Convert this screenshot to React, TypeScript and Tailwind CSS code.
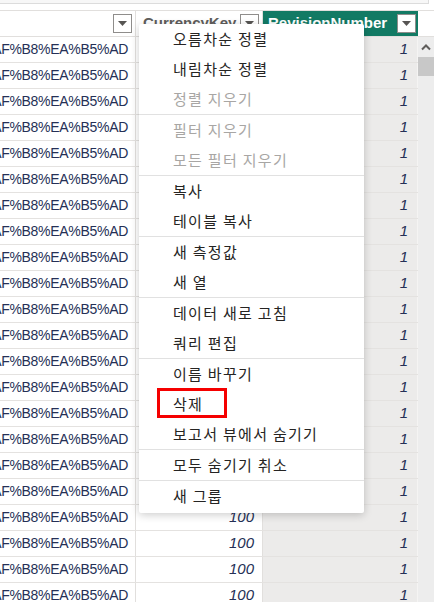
import React from "react";

const ROWS = Array.from({ length: 22 }, (_, i) => i);

type Item = { label: string; disabled?: boolean };

const GROUPS: Item[][] = [
  [{ label: "오름차순 정렬" }, { label: "내림차순 정렬" }, { label: "정렬 지우기", disabled: true }],
  [{ label: "필터 지우기", disabled: true }, { label: "모든 필터 지우기", disabled: true }],
  [{ label: "복사" }, { label: "테이블 복사" }],
  [{ label: "새 측정값" }, { label: "새 열" }],
  [{ label: "데이터 새로 고침" }, { label: "쿼리 편집" }],
  [{ label: "이름 바꾸기" }, { label: "삭제" }, { label: "보고서 뷰에서 숨기기" }],
  [{ label: "모두 숨기기 취소" }],
  [{ label: "새 그룹" }],
];

function DropButton() {
  return (
    <div className="flex h-[19px] w-[19px] items-center justify-center border border-[#8f8d8b] bg-white">
      <svg width="9" height="5" viewBox="0 0 9 5">
        <path d="M0 0 H9 L4.5 5 Z" fill="#575553" />
      </svg>
    </div>
  );
}

export default function App() {
  return (
    <div className="relative h-[602px] w-[434px] overflow-hidden bg-white font-['Liberation_Sans',sans-serif]">
      {/* formula bar edge */}
      <div className="h-[4px] w-[429px] border-b border-r border-[#dcdcdc] bg-[#f7f7f7]" />

      {/* header */}
      <div className="mt-[6px] flex h-[27px] border-y border-[#e1dfdd]">
        <div className="flex w-[136px] items-center justify-end border-r border-[#e1dfdd] pr-[3px]">
          <DropButton />
        </div>
        <div className="flex w-[127px] items-center justify-between border-r border-[#e1dfdd] pl-[7px] pr-[3px]">
          <span className="text-[15px] font-bold text-[#605e5c]">CurrencyKey</span>
          <DropButton />
        </div>
        <div className="flex w-[155px] items-center justify-between bg-[#127a64] pl-[5px] pr-[2px]">
          <span className="text-[15px] font-bold text-white">RevisionNumber</span>
          <DropButton />
        </div>
      </div>

      {/* body */}
      <div className="flex">
        <div className="w-[418px]">
          {ROWS.map((i) => (
            <div key={i} className="flex h-[26px] border-b border-[#e4e2e0] text-[#253056]">
              <div className="flex w-[136px] items-center justify-end overflow-hidden whitespace-nowrap border-r border-[#e1dfdd] pr-[7px] text-[14px] tracking-[-0.3px]">
                %EB%AF%B8%EA%B5%AD
              </div>
              <div className="flex w-[127px] items-center justify-end border-r border-[#e1dfdd] pr-[8px] text-[15px] italic">
                100
              </div>
              <div className="flex w-[155px] items-center justify-end border-r border-[#f5f4f3] bg-[#ecebea] pr-[9px] text-[15px] italic">
                1
              </div>
            </div>
          ))}
        </div>
        {/* scrollbar */}
        <div className="flex w-[16px] flex-col items-center bg-[#ededed]">
          <svg width="10" height="7" viewBox="0 0 10 7" className="mt-[7px]">
            <path d="M1 5.5 L5 1.5 L9 5.5" fill="none" stroke="#5f5d5b" strokeWidth="2" />
          </svg>
          <div className="mt-[6px] h-[19px] w-full bg-[#c8c8c8]" />
        </div>
      </div>

      {/* context menu */}
      <div className="absolute left-[139px] top-[24px] w-[225px] rounded-[2px] bg-white pb-[2px] font-['Noto_Sans_CJK_KR',sans-serif] text-[15px] tracking-[1.3px] shadow-[0_2px_8px_rgba(0,0,0,0.2)]">
        {GROUPS.map((group, gi) => (
          <div key={gi} className={gi > 0 ? "border-t border-[#e1e1e1]" : ""}>
            {group.map((item) => (
              <div
                key={item.label}
                className={`flex h-[30px] items-center pl-[34px] ${item.disabled ? "text-[#a8a6a4]" : "text-[#252423]"}`}
              >
                {item.label}
              </div>
            ))}
          </div>
        ))}
      </div>

      {/* highlight box */}
      <div className="absolute left-[157px] top-[388px] h-[30px] w-[70px] border-[3px] border-[#f50000]" />
    </div>
  );
}
